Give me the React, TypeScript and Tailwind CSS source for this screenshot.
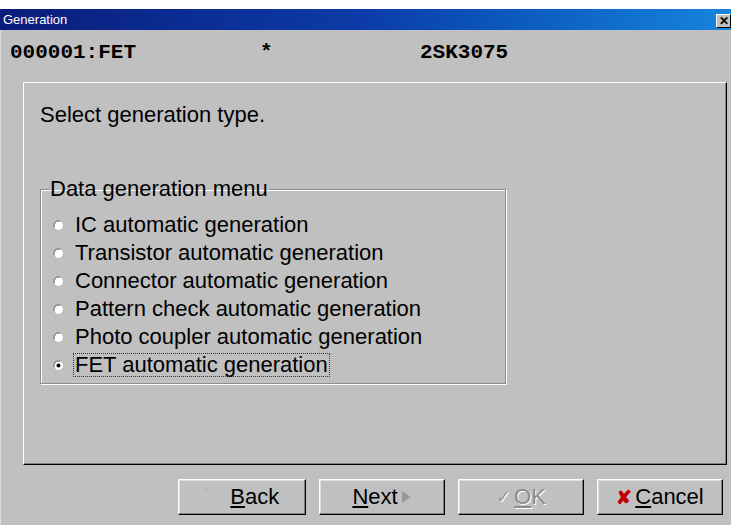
import type { ReactNode } from 'react'

const OPTIONS = [
  'IC automatic generation',
  'Transistor automatic generation',
  'Connector automatic generation',
  'Pattern check automatic generation',
  'Photo coupler automatic generation',
  'FET automatic generation',
]

/** Small classic radio dot, sunken white well. */
function Radio({ checked }: { checked: boolean }): JSX.Element {
  return (
    <svg width="11" height="11" viewBox="0 0 11 11" className="shrink-0">
      <circle cx="5.5" cy="5.5" r="5" fill="#fff" stroke="#b4b4b4" strokeWidth="1" />
      <path d="M1.4 7.2 A4.4 4.4 0 0 1 7.2 1.4" fill="none" stroke="#7a7a7a" strokeWidth="1.2" />
      {checked ? <circle cx="5.5" cy="5.5" r="2" fill="#000" /> : null}
    </svg>
  )
}

function WinButton({ children, width }: { children: ReactNode; width: string }): JSX.Element {
  return (
    <button
      type="button"
      className={`flex h-[36px] ${width} items-center justify-center gap-[3px] border-b border-r border-b-black border-r-black border-l border-t border-l-white border-t-white bg-[#c0c0c0] text-[22px] leading-none shadow-[inset_-1px_-1px_0_#808080,inset_1px_1px_0_#dfdfdf]`}
    >
      {children}
    </button>
  )
}

export default function App(): JSX.Element {
  return (
    <div className="flex h-[525px] w-[731px] flex-col overflow-hidden bg-white font-['Liberation_Sans',Arial,sans-serif] text-black">
      <div className="h-[9px] shrink-0 bg-white" />
      <div className="flex flex-1 flex-col bg-[#c0c0c0]">
        {/* title bar */}
        <div className="flex h-[21px] shrink-0 items-center justify-between bg-gradient-to-r from-[#0a1c7c] via-[#0c3ca8] to-[#1884dc] pl-[3px]">
          <span className="text-[13px] leading-none text-white">Generation</span>
          <span className="mb-[-3px] flex h-[14px] w-[15px] items-center justify-center border-b border-r border-b-black border-r-black border-l border-t border-l-white border-t-white bg-[#c0c0c0] text-[12px] font-bold leading-none">
            ✕
          </span>
        </div>

        <div className="flex flex-1 flex-col border-l border-l-[#dcdcdc]">
          {/* part header */}
          <div className="mt-[12px] flex h-[21px] pl-[9px] font-['Liberation_Mono','Courier_New',monospace] text-[21px] font-bold leading-none">
            <span className="w-[250px]">000001:FET</span>
            <span className="w-[160px]">*</span>
            <span>2SK3075</span>
          </div>

          {/* main panel */}
          <div className="ml-[22px] mt-[19px] flex h-[383px] w-[704px] flex-col border-b border-l border-r border-t border-b-black border-l-white border-r-black border-t-white pl-[16px] pt-[20px] text-[22px] shadow-[inset_-1px_-1px_0_#808080]">
            <p className="leading-[24px]">Select generation type.</p>

            <fieldset className="mt-[50px] w-[466px] border border-[#8c8c8c] px-[12px] pb-[4px] pt-[10px] shadow-[1px_1px_0_#fff,inset_1px_1px_0_#fff]">
              <legend className="ml-[-3px] pr-[1px] leading-[24px]">Data generation menu</legend>
              <ul className="flex flex-col">
                {OPTIONS.map((label, i) => {
                  const checked = i === OPTIONS.length - 1
                  return (
                    <li key={label} className="flex h-[28px] items-center gap-[9px]">
                      <Radio checked={checked} />
                      <span
                        className={
                          checked
                            ? 'border border-dotted border-[#333] px-[1px] leading-[22px]'
                            : 'border border-transparent px-[1px] leading-[22px]'
                        }
                      >
                        {label}
                      </span>
                    </li>
                  )
                })}
              </ul>
            </fieldset>
          </div>

          {/* wizard buttons */}
          <div className="mt-[14px] flex justify-end gap-[13px] pr-[8px]">
            <WinButton width="w-[128px]">
              <span className="mr-[20px] mt-[-14px] text-[8px] text-[#666]">·</span>
              <span>
                <u>B</u>ack
              </span>
            </WinButton>
            <WinButton width="w-[126px]">
              <span>
                <u>N</u>ext
              </span>
              <svg width="11" height="14" viewBox="0 0 11 14">
                <path d="M1 1 L10 7 L1 13 Z" fill="#9a9a9a" />
              </svg>
            </WinButton>
            <WinButton width="w-[126px]">
              <span className="text-[18px] text-[#9c9c9c] [text-shadow:1px_1px_0_#fff]">✓</span>
              <span className="text-[#8c8c8c] [text-shadow:1px_1px_0_#fff]">
                <u>O</u>K
              </span>
            </WinButton>
            <WinButton width="w-[126px]">
              <span className="text-[19px] font-bold text-[#c00000]">✘</span>
              <span>
                <u>C</u>ancel
              </span>
            </WinButton>
          </div>
        </div>
      </div>
    </div>
  )
}
